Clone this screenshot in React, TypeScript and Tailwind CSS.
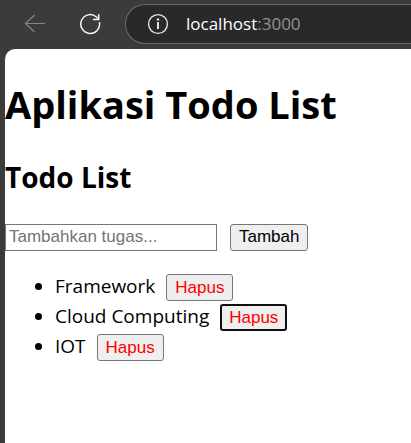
import { useState } from "react";

const initialTasks = ["Framework", "Cloud Computing", "IOT"];

function BackIcon() {
  return (
    <svg width="22" height="20" viewBox="0 0 22 20" fill="none" stroke="#858585" strokeWidth="1.2" aria-hidden="true">
      <path d="M21 9.5H1.5M10.5 1L1.5 9.5l9 8.5" />
    </svg>
  );
}

function ReloadIcon() {
  return (
    <svg width="22" height="22" viewBox="0 0 22 22" fill="none" stroke="#f5f5f5" strokeWidth="1.5" aria-hidden="true">
      <path d="M20.4 9.2A9.4 9.4 0 1 1 17.4 4L19.6 6" />
      <path d="M19.7 1.2v5.3h-5.8" />
    </svg>
  );
}

function InfoIcon() {
  return (
    <svg width="22" height="22" viewBox="0 0 22 22" fill="none" stroke="#e4e4e4" aria-hidden="true">
      <circle cx="11" cy="11" r="9.4" strokeWidth="1.4" />
      <path d="M11 9V16" strokeWidth="2" />
      <circle cx="11" cy="6.5" r="1.2" fill="#e4e4e4" stroke="none" />
    </svg>
  );
}

function BrowserBar() {
  return (
    <header className="flex h-[49px] items-start overflow-hidden pt-1">
      <button type="button" aria-label="Back" className="ml-6 flex h-10 items-center">
        <BackIcon />
      </button>
      <button type="button" aria-label="Reload" className="ml-[33px] flex h-10 items-center">
        <ReloadIcon />
      </button>
      <div className="ml-6 flex h-10 flex-1 items-center rounded-l-full border border-r-0 border-[#6a6a6a] bg-[#292929] pl-[21px] text-[17px] text-white">
        <InfoIcon />
        <span className="ml-[17px]">
          localhost<span className="text-[#929292]">:3000</span>
        </span>
      </div>
    </header>
  );
}

export default function App() {
  const [tasks, setTasks] = useState(initialTasks);
  const [draft, setDraft] = useState("");

  const addTask = () => {
    if (draft.trim()) {
      setTasks([...tasks, draft.trim()]);
      setDraft("");
    }
  };

  return (
    <div className="flex min-h-screen flex-col bg-[#3b3b3b] font-['Open_Sans','Noto_Sans',sans-serif]">
      <BrowserBar />
      <main className="ml-[5px] flex-1 rounded-tl-[10px] bg-white pt-7 text-black">
        <h1 className="text-[38px] leading-[54px] font-bold">Aplikasi Todo List</h1>
        <h2 className="mt-[26px] text-[28px] leading-10 font-bold">Todo List</h2>
        <div className="mt-[27px] flex gap-[13px] font-['Liberation_Sans',Arial,sans-serif] text-[17px]">
          <input
            type="text"
            aria-label="Tugas"
            placeholder="Tambahkan tugas..."
            value={draft}
            onChange={(event) => setDraft(event.target.value)}
            className="h-[27px] w-[212px] border border-[#767676] px-[3px] pb-0.5 placeholder:text-[#757575]"
          />
          <button
            type="button"
            onClick={addTask}
            className="h-[27px] rounded-[3px] border border-[#767676] bg-[#efefef] px-2 pb-0.5 leading-5"
          >
            Tambah
          </button>
        </div>
        <ul className="mt-5 list-disc pl-[50px] text-[19px] leading-[30px]">
          {tasks.map((task, index) => (
            <li key={task}>
              <span className="flex h-[30px] items-center gap-[11px]">
                {task}
                <button
                  type="button"
                  onClick={() => setTasks(tasks.filter((_, i) => i !== index))}
                  className={`mt-[3px] h-[27px] rounded-[3px] bg-[#efefef] font-['Liberation_Sans',Arial,sans-serif] text-[17px] leading-5 text-[#ff0000] ${
                    index === 1 ? "border-2 border-[#101010] px-[7px]" : "border border-[#767676] px-2"
                  }`}
                >
                  Hapus
                </button>
              </span>
            </li>
          ))}
        </ul>
      </main>
    </div>
  );
}
